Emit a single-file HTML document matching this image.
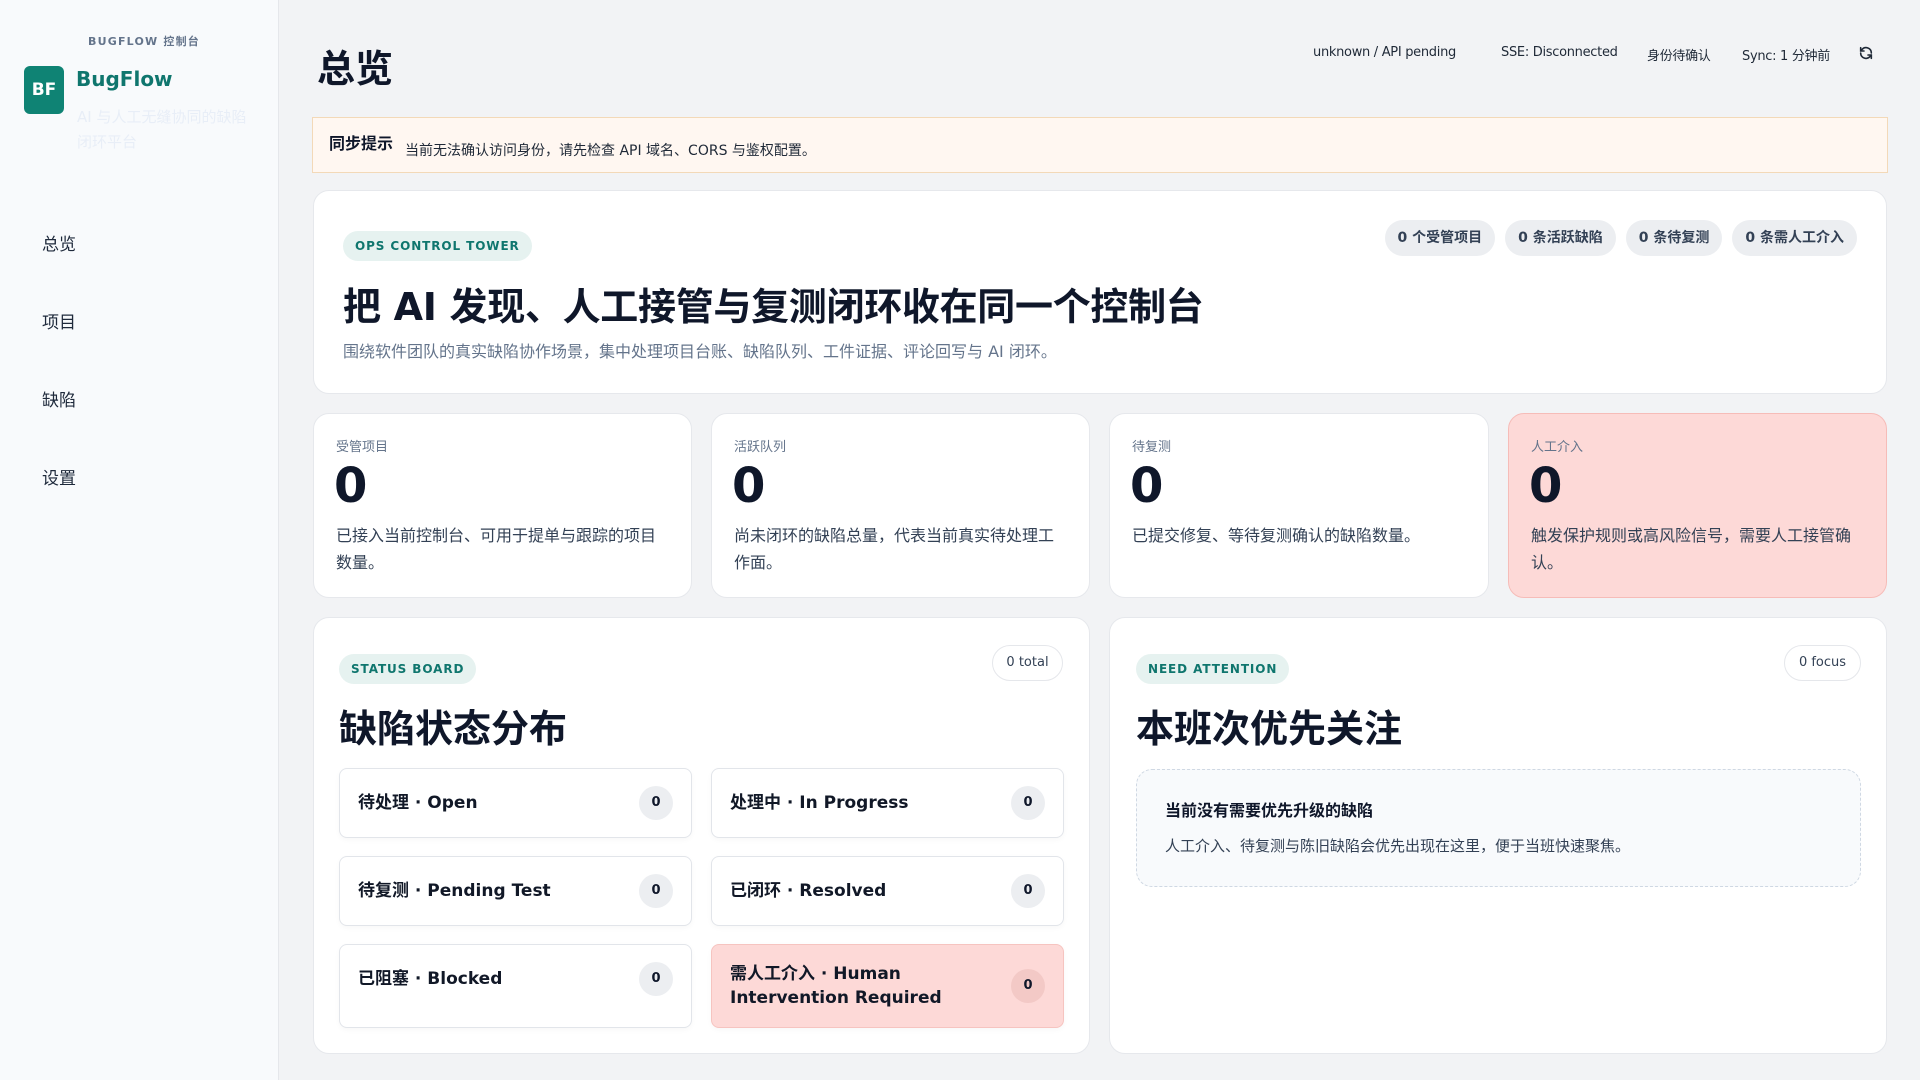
<!DOCTYPE html>
<html><head><meta charset="utf-8"><style>
*{box-sizing:border-box;margin:0;padding:0}
body{width:1920px;height:1080px;overflow:hidden;background:#f2f3f5;font-family:"DejaVu Sans","Noto Sans CJK SC",sans-serif;color:#0f172a;position:relative}
.abs{position:absolute}
.side{left:0;top:0;width:279px;height:1080px;background:#f8fafc;border-right:1px solid #e5e7eb}
.card{background:#fff;border:1px solid #e6e8ec;border-radius:16px;position:absolute}
.badge{position:absolute;background:#e6f2f0;color:#0f766e;font-size:12px;font-weight:bold;letter-spacing:0.9px;border-radius:16px;height:30px;line-height:30px;padding:0 12px}
.pill{display:inline-block;background:#eceef1;color:#334155;font-size:14px;font-weight:bold;border-radius:18px;height:36px;line-height:36px;padding:0 13px;margin-left:10px}
.nav{position:absolute;left:42px;font-size:17px;color:#1e293b}
.stat .l{position:absolute;left:22px;top:22px;font-size:13px;color:#64748b}
.stat .n{position:absolute;left:20px;top:44px;font-size:48px;font-weight:bold;color:#0f172a}
.stat .d{position:absolute;left:22px;top:108px;right:24px;font-size:16px;line-height:27px;color:#334155}
.it{position:absolute;width:353px;background:#fff;border:1px solid #e2e5ea;border-radius:8px;box-shadow:0 2px 6px rgba(0,0,0,.03)}
.it .t{position:absolute;left:18px;top:50%;transform:translateY(-50%);font-size:17px;font-weight:bold;color:#111827;line-height:24px}
.it .c{position:absolute;right:18px;top:50%;transform:translateY(-50%);width:34px;height:34px;border-radius:50%;background:#eceef1;font-size:13px;font-weight:bold;text-align:center;line-height:34px}
.top{position:absolute;top:45px;font-size:13px;color:#1f2937;letter-spacing:-0.3px}
</style></head><body>
<div class="abs side"></div>
<div class="abs" style="left:88px;top:33px;font-size:11px;font-weight:bold;letter-spacing:1.2px;color:#64748b">BUGFLOW 控制台</div>
<div class="abs" style="left:24px;top:66px;width:40px;height:48px;border-radius:6px;background:#0f8374;color:#fff;font-weight:bold;font-size:17px;text-align:center;line-height:48px">BF</div>
<div class="abs" style="left:76px;top:67px;font-size:20px;font-weight:bold;color:#0f766e">BugFlow</div>
<div class="abs" style="left:77px;top:105px;width:180px;font-size:15px;line-height:25px;color:#e8eef7">AI 与人工无缝协同的缺陷闭环平台</div>
<div class="nav" style="top:230px">总览</div>
<div class="nav" style="top:308px">项目</div>
<div class="nav" style="top:386px">缺陷</div>
<div class="nav" style="top:464px">设置</div>

<div class="abs" style="left:317px;top:38px;font-size:38px;font-weight:bold">总览</div>
<div class="top" style="left:1313px">unknown / API pending</div>
<div class="top" style="left:1501px">SSE: Disconnected</div>
<div class="top" style="left:1647px">身份待确认</div>
<div class="top" style="left:1742px">Sync: 1 分钟前</div>
<svg class="abs" style="left:1858px;top:45px" width="16" height="16" viewBox="0 0 24 24" fill="none" stroke="#1f2937" stroke-width="2.4" stroke-linecap="round"><path d="M20 12a8 8 0 0 0-14-5.3L4 9M4 4v5h5M4 12a8 8 0 0 0 14 5.3L20 15M20 20v-5h-5"/></svg>

<div class="abs" style="left:312px;top:117px;width:1576px;height:56px;background:#fff7f1;border:1px solid #f3d9b8"></div>
<div class="abs" style="left:329px;top:130px;font-size:16px;font-weight:bold">同步提示</div>
<div class="abs" style="left:405px;top:140px;font-size:14px;color:#1f2937">当前无法确认访问身份，请先检查 API 域名、CORS 与鉴权配置。</div>

<div class="card" style="left:313px;top:190px;width:1574px;height:204px"></div>
<div class="badge" style="left:343px;top:231px">OPS CONTROL TOWER</div>
<div class="abs" style="right:63px;top:220px"><span class="pill">0 个受管项目</span><span class="pill">0 条活跃缺陷</span><span class="pill">0 条待复测</span><span class="pill">0 条需人工介入</span></div>
<div class="abs" style="left:343px;top:276px;font-size:38px;font-weight:bold;letter-spacing:-0.3px">把 AI 发现、人工接管与复测闭环收在同一个控制台</div>
<div class="abs" style="left:343px;top:338px;font-size:16px;color:#64748b">围绕软件团队的真实缺陷协作场景，集中处理项目台账、缺陷队列、工件证据、评论回写与 AI 闭环。</div>

<div class="card stat" style="left:313px;top:413px;width:379px;height:185px"><div class="l">受管项目</div><div class="n">0</div><div class="d">已接入当前控制台、可用于提单与跟踪的项目数量。</div></div>
<div class="card stat" style="left:711px;top:413px;width:379px;height:185px"><div class="l">活跃队列</div><div class="n">0</div><div class="d">尚未闭环的缺陷总量，代表当前真实待处理工作面。</div></div>
<div class="card stat" style="left:1109px;top:413px;width:380px;height:185px"><div class="l">待复测</div><div class="n">0</div><div class="d">已提交修复、等待复测确认的缺陷数量。</div></div>
<div class="card stat" style="left:1508px;top:413px;width:379px;height:185px;background:#fdd9d7;border-color:#f6bcb8"><div class="l">人工介入</div><div class="n">0</div><div class="d">触发保护规则或高风险信号，需要人工接管确认。</div></div>

<div class="card" style="left:313px;top:617px;width:777px;height:437px"></div>
<div class="badge" style="left:339px;top:654px">STATUS BOARD</div>
<div class="abs" style="left:992px;top:645px;width:71px;height:36px;border:1px solid #e5e7eb;border-radius:18px;font-size:13px;text-align:center;line-height:34px;color:#334155">0 total</div>
<div class="abs" style="left:339px;top:698px;font-size:38px;font-weight:bold">缺陷状态分布</div>
<div class="it" style="left:339px;top:768px;height:70px"><div class="t">待处理 · Open</div><div class="c">0</div></div>
<div class="it" style="left:711px;top:768px;height:70px"><div class="t">处理中 · In Progress</div><div class="c">0</div></div>
<div class="it" style="left:339px;top:856px;height:70px"><div class="t">待复测 · Pending Test</div><div class="c">0</div></div>
<div class="it" style="left:711px;top:856px;height:70px"><div class="t">已闭环 · Resolved</div><div class="c">0</div></div>
<div class="it" style="left:339px;top:944px;height:84px"><div class="t" style="top:34px">已阻塞 · Blocked</div><div class="c" style="top:34px">0</div></div>
<div class="it" style="left:711px;top:944px;height:84px;background:#fdd9d7;border-color:#f6c4c0"><div class="t">需人工介入 · Human<br>Intervention Required</div><div class="c" style="background:#f3c9c6">0</div></div>

<div class="card" style="left:1109px;top:617px;width:778px;height:437px"></div>
<div class="badge" style="left:1136px;top:654px">NEED ATTENTION</div>
<div class="abs" style="left:1784px;top:645px;width:77px;height:36px;border:1px solid #e5e7eb;border-radius:18px;font-size:13px;text-align:center;line-height:34px;color:#334155">0 focus</div>
<div class="abs" style="left:1136px;top:698px;font-size:38px;font-weight:bold">本班次优先关注</div>
<div class="abs" style="left:1136px;top:769px;width:725px;height:118px;border:1px dashed #cfd8e3;border-radius:16px;background:#f8fafc"></div>
<div class="abs" style="left:1165px;top:797px;font-size:16px;font-weight:bold">当前没有需要优先升级的缺陷</div>
<div class="abs" style="left:1165px;top:835px;font-size:15px;color:#334155">人工介入、待复测与陈旧缺陷会优先出现在这里，便于当班快速聚焦。</div>
</body></html>
